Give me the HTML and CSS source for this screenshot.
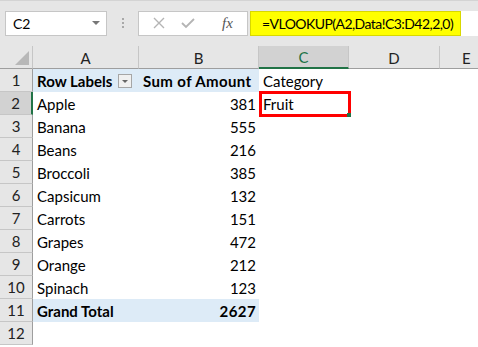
FILE: index.html
```html
<!DOCTYPE html>
<html>
<head>
<meta charset="utf-8">
<link rel="stylesheet" href="styles.css">
</head>
<body>
<div class="app">
  <div class="toolbar">
    <div class="namebox"><span class="name">C2</span><span class="caret"></span></div>
    <div class="dots"><i></i><i></i><i></i></div>
    <div class="fxbox">
      <svg class="ico" width="14" height="14" viewBox="0 0 14 14"><path d="M2 2 L12 12 M12 2 L2 12" stroke="#b4b4b4" stroke-width="1.4" fill="none"/></svg>
      <svg class="ico" width="16" height="14" viewBox="0 0 16 14"><path d="M2 7 L6 11 L14 3" stroke="#b4b4b4" stroke-width="1.8" fill="none"/></svg>
      <span class="fx">fx</span>
    </div>
    <div class="formula"><span class="ftext">=VLOOKUP(A2,Data!C3:D42,2,0)</span></div>
  </div>
  <div class="sheet">
    <div class="hd corner"><span class="tri"></span></div>
    <div class="hd col">A</div>
    <div class="hd col">B</div>
    <div class="hd col sel">C</div>
    <div class="hd col">D</div>
    <div class="hd col last">E</div>

    <div class="hd row">1</div>
    <div class="c pv b">Row Labels <span class="dd"></span></div>
    <div class="c pv b">Sum of Amount</div>
    <div class="c">Category</div><div class="c"></div><div class="c"></div>

    <div class="hd row rsel">2</div>
    <div class="c">Apple</div><div class="c r">381</div>
    <div class="c active"><span class="box"></span>Fruit<span class="handle"></span></div><div class="c"></div><div class="c"></div>

    <div class="hd row">3</div>
    <div class="c">Banana</div><div class="c r">555</div><div class="c"></div><div class="c"></div><div class="c"></div>

    <div class="hd row">4</div>
    <div class="c">Beans</div><div class="c r">216</div><div class="c"></div><div class="c"></div><div class="c"></div>

    <div class="hd row">5</div>
    <div class="c">Broccoli</div><div class="c r">385</div><div class="c"></div><div class="c"></div><div class="c"></div>

    <div class="hd row">6</div>
    <div class="c">Capsicum</div><div class="c r">132</div><div class="c"></div><div class="c"></div><div class="c"></div>

    <div class="hd row">7</div>
    <div class="c">Carrots</div><div class="c r">151</div><div class="c"></div><div class="c"></div><div class="c"></div>

    <div class="hd row">8</div>
    <div class="c">Grapes</div><div class="c r">472</div><div class="c"></div><div class="c"></div><div class="c"></div>

    <div class="hd row">9</div>
    <div class="c">Orange</div><div class="c r">212</div><div class="c"></div><div class="c"></div><div class="c"></div>

    <div class="hd row">10</div>
    <div class="c">Spinach</div><div class="c r">123</div><div class="c"></div><div class="c"></div><div class="c"></div>

    <div class="hd row">11</div>
    <div class="c pv b">Grand Total</div><div class="c pv b r">2627</div><div class="c"></div><div class="c"></div><div class="c"></div>

    <div class="hd row">12</div>
    <div class="c"></div><div class="c"></div><div class="c"></div><div class="c"></div><div class="c"></div>
  </div>
</div>
</body>
</html>
```

FILE: styles.css
```css
* { box-sizing: border-box; }
html, body { margin: 0; padding: 0; background: #ffffff; }
body { font-family: Lato, "Open Sans", sans-serif; font-size: 15px; color: #000; }
.app { width: 478px; height: 347px; overflow: hidden; }

.toolbar {
  height: 46px;
  background: #e6e6e6;
  border-top: 1px solid #d4d4d4;
  display: flex;
  align-items: center;
  padding: 0 0 1px 5px;
}
.namebox {
  width: 102px; height: 25px;
  background: #fff;
  border: 1px solid #c6c6c6;
  display: flex; align-items: center; justify-content: space-between;
  padding: 0 6px 0 7px;
  font-size: 14px;
}
.caret {
  width: 0; height: 0;
  border-left: 4px solid transparent; border-right: 4px solid transparent;
  border-top: 4px solid #777;
}
.dots { width: 31px; display: flex; flex-direction: column; align-items: center; gap: 2px; }
.dots i { width: 2px; height: 2px; background: #a8a8a8; display: block; }
.fxbox {
  width: 110px; height: 25px;
  background: #fff;
  border: 1px solid #c6c6c6;
  display: flex; align-items: center;
  padding-left: 13px;
}
.fxbox .ico { margin-right: 14px; }
.fxbox .ico + .ico { margin-right: 26px; }
.fx { font-family: "Liberation Serif", serif; font-style: italic; font-size: 15px; color: #555; }
.formula {
  flex: 1; height: 25px; margin-left: 2px;
  background: #fff;
  display: flex; align-items: stretch;
}
.ftext {
  background: #ffff00;
  width: 211px;
  padding-left: 11px;
  display: flex; align-items: center;
  font-size: 14px;
  letter-spacing: -0.55px;
  white-space: nowrap;
  border: 1px solid #d8d800;
}

.sheet {
  display: grid;
  grid-template-columns: 33px 106px 120px 90px 91px 1fr;
  grid-template-rows: 23px;
  grid-auto-rows: 23px;
}
.hd {
  background: #e6e6e6;
  color: #222;
  display: flex; align-items: center; justify-content: center;
  font-size: 15px;
}
.corner { border-right: 1px solid #c6c6c6; border-bottom: 1px solid #9e9e9e; position: relative; }
.tri {
  position: absolute; right: 3px; bottom: 3px;
  width: 0; height: 0;
  border-left: 14px solid transparent;
  border-bottom: 14px solid #b8b8b8;
}
.col { border-right: 1px solid #c6c6c6; border-bottom: 1px solid #9e9e9e; padding-top: 1px; }
.col.last { border-right: none; justify-content: flex-start; padding-left: 22px; }
.col.sel { background: #d2d2d2; color: #217346; border-bottom: 2px solid #217346; }
.row { border-bottom: 1px solid #c6c6c6; border-right: 1px solid #9e9e9e; }
.row.rsel { background: #d2d2d2; border-right: 2px solid #217346; }

.c {
  background: #fff;
  display: flex; align-items: center;
  padding: 0 4px;
  white-space: nowrap;
  position: relative;
}
.c.r { justify-content: flex-end; padding-right: 3px; }
.c.b { font-weight: 700; }
.pv { background: #ddebf7; }
.sheet .c:nth-child(6n+3).b { letter-spacing: 0.4px; }
.dd {
  display: inline-block;
  width: 14px; height: 14px;
  margin-left: 6px;
  background: #f0f0f0;
  border: 1px solid #a6a6a6;
  position: relative;
}
.dd::after {
  content: ""; position: absolute; left: 3px; top: 5px;
  border-left: 3px solid transparent; border-right: 3px solid transparent;
  border-top: 3px solid #666;
}
.active .box {
  position: absolute;
  left: 0; top: -1px; right: -2px; bottom: -2px;
  border: 3px solid #ff0000;
  z-index: 2;
}
.handle {
  position: absolute; right: -2px; bottom: -2px;
  width: 4px; height: 4px;
  background: #217346;
  z-index: 3;
}
```
